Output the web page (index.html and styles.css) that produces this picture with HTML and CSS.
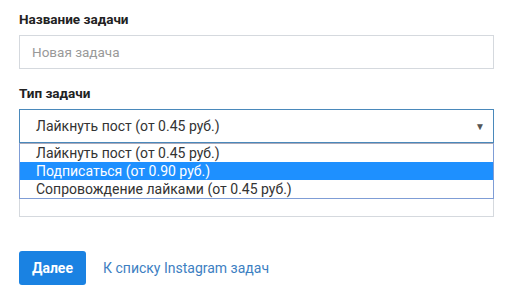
FILE: index.html
```html
<!DOCTYPE html>
<html lang="ru">
<head>
  <meta charset="UTF-8">
  <title>Новая задача</title>
  <link rel="stylesheet" href="styles.css">
</head>
<body>
<form class="task-form">
  <div class="form-group">
    <label class="form-label">Название задачи</label>
    <div class="form-input placeholder">Новая задача</div>
  </div>

  <div class="form-group">
    <label class="form-label">Тип задачи</label>
    <div class="select-wrap">
      <div class="form-select">
        <span>Лайкнуть пост (от 0.45 руб.)</span>
        <span class="select-arrow">&#9660;</span>
      </div>
      <ul class="select-menu">
        <li>Лайкнуть пост (от 0.45 руб.)</li>
        <li class="active">Подписаться (от 0.90 руб.)</li>
        <li>Сопровождение лайками (от 0.45 руб.)</li>
      </ul>
    </div>
    <div class="form-area"></div>
  </div>

  <div class="form-actions">
    <button type="button" class="btn-primary">Далее</button>
    <a href="#" class="back-link">К списку Instagram задач</a>
  </div>
</form>
</body>
</html>
```

FILE: styles.css
```css
* {
  margin: 0;
  padding: 0;
  box-sizing: border-box;
}

body {
  background: #fff;
  font-family: Roboto, 'Liberation Sans', sans-serif;
  color: #333;
}

.task-form {
  width: 475px;
  margin-left: 19px;
  padding-top: 11px;
}

.form-group {
  margin-bottom: 16px;
}

.form-label {
  display: block;
  font-size: 13.5px;
  font-weight: bold;
  color: #222;
  line-height: 16px;
  margin-bottom: 8px;
}

.form-input {
  height: 34px;
  border: 1px solid #d5d9de;
  padding: 0 12px;
  font-size: 13.5px;
  line-height: 32px;
}

.placeholder {
  color: #999;
}

.select-wrap {
  position: relative;
}

.form-select {
  height: 34px;
  border: 1px solid #4a89bb;
  padding: 0 8px 0 16px;
  display: flex;
  justify-content: space-between;
  align-items: center;
  font-size: 14px;
  color: #333;
}

.select-arrow {
  font-size: 10px;
  color: #555;
}

.select-menu {
  position: absolute;
  top: 34px;
  left: 0;
  right: 0;
  z-index: 2;
  list-style: none;
  background: #fff;
  border: 1px solid #7f9dd6;
  border-top-color: #aab;
  font-size: 14px;
  color: #333;
}

.select-menu li {
  height: 18px;
  line-height: 18px;
  padding-left: 16px;
}

.select-menu li.active {
  background: #1e90ff;
  color: #fff;
}

.form-area {
  margin-top: 8px;
  height: 66px;
  border: 1px solid #d5d9de;
}

.form-actions {
  display: flex;
  align-items: center;
  gap: 17px;
  margin-top: 34px;
}

.btn-primary {
  width: 67px;
  height: 34px;
  border: none;
  border-radius: 3px;
  background: #1a82e2;
  color: #fff;
  font-family: inherit;
  font-size: 14px;
  font-weight: bold;
}

.back-link {
  font-size: 14px;
  color: #3d80c2;
  text-decoration: none;
}
```
